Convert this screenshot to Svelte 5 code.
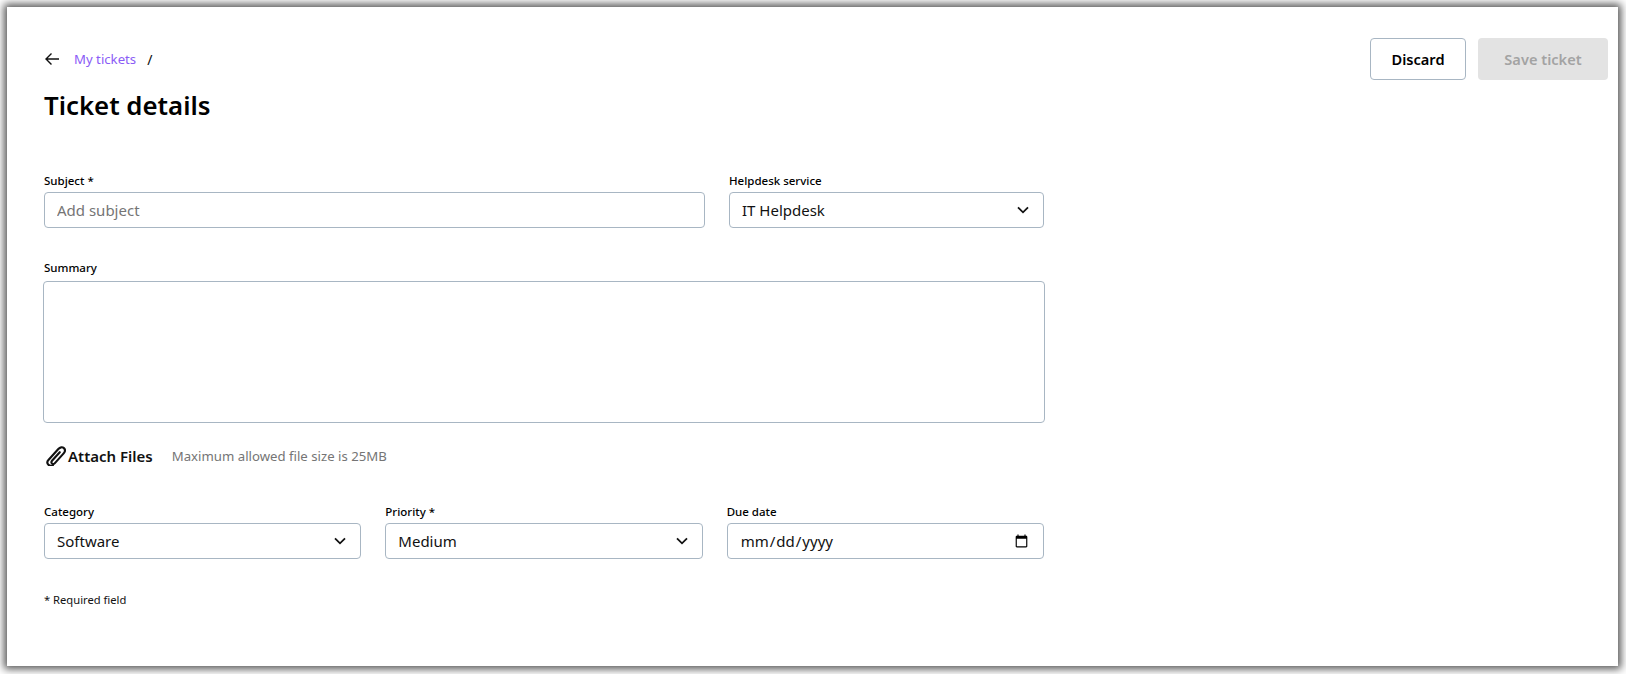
<script>
    let subject = '';
    let summary = '';
    let service = 'IT Helpdesk';
    let category = 'Software';
    let priority = 'Medium';
    let due = '';
</script>

<div class="frame">
    <main class="card">
        <header class="top">
            <div>
                <nav class="crumbs">
                    <svg class="back" width="16" height="16" viewBox="0 0 16 16" fill="none" stroke="#111" stroke-width="1.4">
                        <path d="M15 8H2M7.5 2.5 2 8l5.500 5.500" />
                    </svg>
                    <a href="#tickets">My tickets</a>
                    <span class="slash">/</span>
                </nav>
                <h1>Ticket details</h1>
            </div>
            <div class="actions">
                <button class="discard">Discard</button>
                <button class="save" disabled>Save ticket</button>
            </div>
        </header>

        <form class="form">
            <div class="row first">
                <label class="field">
                    <span class="lbl">Subject *</span>
                    <input type="text" placeholder="Add subject" bind:value={subject} />
                </label>
                <label class="field">
                    <span class="lbl">Helpdesk service</span>
                    <span class="selectwrap">
                        <select bind:value={service}>
                            <option>IT Helpdesk</option>
                        </select>
                        <svg class="chev" width="12" height="8" viewBox="0 0 12 8" fill="none" stroke="#111" stroke-width="1.8"><path d="M1 1.3l5 5 5-5" /></svg>
                    </span>
                </label>
            </div>

            <label class="field summary">
                <span class="lbl">Summary</span>
                <textarea bind:value={summary}></textarea>
            </label>

            <div class="attach">
                <button type="button" class="attachbtn">
                    <svg width="20" height="20" viewBox="1 1 18 18" fill="none" stroke="#111" stroke-width="1.9" stroke-linecap="round">
                        <path d="M7.2 18.200c-1.200.9-3 .8-4-.3-1.200-1.200-1.200-3 0-4.300l8.900-9.900c1.500-1.700 3.700-2 5-.8 1.300 1.200 1.100 3.300-.4 5l-7.700 8.500c-.8.900-1.900 1-2.600.4-.7-.7-.6-1.800.2-2.700l6.800-7.500" />
                    </svg>
                    Attach Files
                </button>
                <span class="hint">Maximum allowed file size is 25MB</span>
            </div>

            <div class="row third">
                <label class="field">
                    <span class="lbl">Category</span>
                    <span class="selectwrap">
                        <select bind:value={category}>
                            <option>Software</option>
                        </select>
                        <svg class="chev" width="12" height="8" viewBox="0 0 12 8" fill="none" stroke="#111" stroke-width="1.8"><path d="M1 1.3l5 5 5-5" /></svg>
                    </span>
                </label>
                <label class="field">
                    <span class="lbl">Priority *</span>
                    <span class="selectwrap">
                        <select bind:value={priority}>
                            <option>Medium</option>
                        </select>
                        <svg class="chev" width="12" height="8" viewBox="0 0 12 8" fill="none" stroke="#111" stroke-width="1.8"><path d="M1 1.3l5 5 5-5" /></svg>
                    </span>
                </label>
                <label class="field">
                    <span class="lbl">Due date</span>
                    <input type="date" bind:value={due} />
                </label>
            </div>

            <p class="required">* Required field</p>
        </form>
    </main>
</div>

<style>
    :global(body) {
        background: #fff;
        font-family: "Noto Sans", "Open Sans", sans-serif;
        color: #0b0b0b;
    }

    .frame {
        height: 674px;
        box-sizing: border-box;
        padding: 7px 8px 8px 7px;
        overflow: hidden;
    }

    .card {
        height: 100%;
        box-sizing: border-box;
        background: #fff;
        box-shadow: 0 0 8px 3px #555;
        padding: 31px 10px 0 37px;
    }

    .top {
        display: flex;
        justify-content: space-between;
        align-items: flex-start;
    }

    .crumbs {
        display: flex;
        align-items: center;
        height: 42px;
        font-size: 13.200px;
    }

    .back {
        margin-right: 14px;
    }

    .crumbs a {
        color: #8b5cf6;
        text-decoration: none;
    }

    .slash {
        margin-left: 11px;
        font-size: 14px;
    }

    h1 {
        margin: 6px 0 0;
        font-size: 25.800px;
        font-weight: 600;
        line-height: 38px;
        color: #000;
    }

    .actions {
        display: flex;
        gap: 12px;
    }

    button {
        font-family: inherit;
    }

    .discard,
    .save {
        height: 42px;
        border-radius: 4px;
        font-size: 14.600px;
        font-weight: 600;
    }

    .discard {
        width: 96px;
        border: 1px solid #a8b6c3;
        background: #fff;
        color: #000;
    }

    .save {
        width: 130px;
        border: 0;
        background: #e3e3e3;
        color: #a3a3a3;
    }

    .form {
        width: 1000px;
        margin-top: 49px;
    }

    .row {
        display: grid;
        gap: 24px;
    }

    .first {
        grid-template-columns: 661px 1fr;
    }

    .third {
        grid-template-columns: repeat(3, 1fr);
        margin-top: 38px;
    }

    .field {
        display: flex;
        flex-direction: column;
        min-width: 0;
    }

    .lbl {
        font-size: 11.500px;
        font-weight: 500;
        line-height: 16px;
        height: 19px;
        color: #000;
    }

    input,
    select,
    textarea {
        box-sizing: border-box;
        width: 100%;
        border: 1px solid #a8b6c3;
        border-radius: 4px;
        background: #fff;
        font-family: inherit;
        font-size: 15px;
        color: #111;
        outline: none;
    }

    input,
    select {
        height: 36px;
        padding: 0 12px;
    }

    input::placeholder {
        color: #757575;
    }

    select {
        appearance: none;
    }

    .selectwrap {
        position: relative;
        display: block;
    }

    .chev {
        position: absolute;
        right: 15px;
        top: 14px;
        pointer-events: none;
    }

    .summary {
        margin-top: 32px;
    }

    .summary .lbl {
        height: 21px;
    }

    textarea {
        display: block;
        width: 1002px;
        margin-left: -1px;
        height: 142px;
        resize: none;
    }

    .attach {
        display: flex;
        align-items: center;
        gap: 19px;
        margin-top: 23px;
        height: 20px;
    }

    .attachbtn {
        display: flex;
        align-items: center;
        gap: 2px;
        padding: 0 0 0 2px;
        border: 0;
        background: none;
        font-size: 15px;
        font-weight: 600;
        color: #111;
    }

    .hint {
        font-size: 13.200px;
        color: #757575;
    }

    .required {
        margin: 33px 0 0;
        font-size: 11.200px;
        line-height: 16px;
        color: #111;
    }
</style>
